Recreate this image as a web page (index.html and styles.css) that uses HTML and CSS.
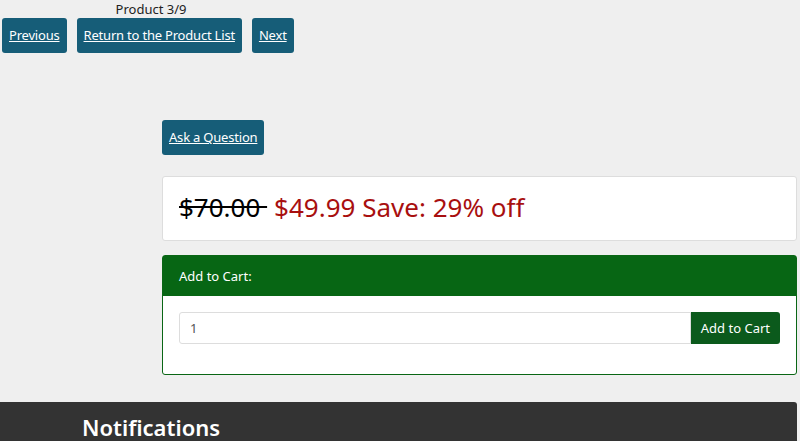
FILE: index.html
```html
<!DOCTYPE html>
<html lang="en">
<head>
    <meta charset="UTF-8">
    <meta name="viewport" content="width=device-width, initial-scale=1.0">
    <title>Product 3/9</title>
    <link rel="stylesheet" href="styles.css">
</head>
<body>
    <div class="pager">
        <div class="pager-count">Product 3/9</div>
        <div class="pager-links">
            <a class="btn" href="#">Previous</a>
            <a class="btn" href="#">Return to the Product List</a>
            <a class="btn" href="#">Next</a>
        </div>
    </div>

    <div class="content">
        <a class="btn" href="#">Ask a Question</a>

        <div class="price-box">
            <span class="old-price">$70.00 </span>
            <span class="new-price">$49.99 Save: 29% off</span>
        </div>

        <div class="cart-panel">
            <div class="cart-heading">Add to Cart:</div>
            <div class="cart-body">
                <form class="cart-form">
                    <input class="qty" type="text" value="1">
                    <button class="cart-btn" type="button">Add to Cart</button>
                </form>
            </div>
        </div>
    </div>

    <div class="notifications">
        <h2>Notifications</h2>
    </div>
</body>
</html>
```

FILE: styles.css
```css
body {
    font-family: "Noto Sans", "Open Sans", sans-serif;
    margin: 0;
    background-color: #efefef;
    color: #222;
    font-size: 13px;
    overflow: hidden;
}
.pager {
    padding: 0 2px;
}
.pager-count {
    width: 298px;
    text-align: center;
    font-size: 13px;
    line-height: 18px;
}
.pager-links {
    display: flex;
    gap: 10px;
}
.btn {
    display: inline-block;
    background-color: #165d78;
    color: white;
    padding: 7px 7px;
    line-height: 21px;
    font-size: 13px;
    letter-spacing: -0.2px;
    border-radius: 3px;
}
.content {
    margin: 67px 3px 0 162px;
}
.price-box {
    margin-top: 21px;
    background-color: white;
    border: 1px solid #ddd;
    border-radius: 3px;
    padding: 12px 16px 15px;
    font-size: 26px;
    line-height: 36px;
}
.old-price {
    color: #000;
    text-decoration: line-through;
}
.new-price {
    margin-left: 7px;
    color: #a80f0f;
}
.cart-panel {
    margin-top: 14px;
    background-color: white;
    border: 1px solid #0a6615;
    border-radius: 3px;
}
.cart-heading {
    background-color: #076614;
    color: white;
    font-size: 13px;
    padding: 10px 16px;
    line-height: 20px;
}
.cart-body {
    padding: 16px 16px 30px;
}
.cart-form {
    display: flex;
}
.qty {
    flex: 1;
    height: 32px;
    box-sizing: border-box;
    border: 1px solid #ddd;
    border-radius: 3px 0 0 3px;
    padding: 0 10px;
    font-family: inherit;
    font-size: 13px;
    color: #555;
}
.cart-btn {
    background-color: #0b5a1c;
    color: white;
    border: none;
    border-radius: 0 3px 3px 0;
    padding: 0 10px;
    font-family: inherit;
    font-size: 13px;
    height: 32px;
}
.notifications {
    margin: 27px 3px 0 0;
    background-color: #333;
    border-radius: 0 3px 0 0;
    padding: 10px 82px 20px;
}
.notifications h2 {
    margin: 0;
    color: white;
    font-size: 22px;
    font-weight: 600;
    line-height: 30px;
}
```
